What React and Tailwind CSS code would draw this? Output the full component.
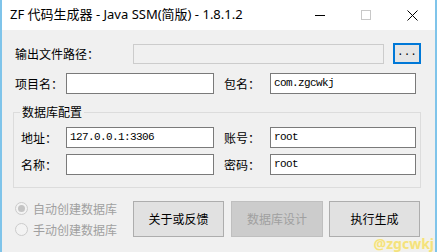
import React from 'react';

const cjk = { fontFamily: '"Microsoft YaHei", "Noto Sans CJK SC", "Noto Sans", sans-serif' };
const mono = { fontFamily: '"Liberation Mono", "DejaVu Sans Mono", monospace' };

const Field = ({ value, className = '' }) => (
    <div
        className={`h-[21px] bg-white border border-[#7a7a7a] flex items-center pl-[3px] text-[11px] tracking-[-0.6px] text-black ${className}`}
        style={mono}
    >
        {value}
    </div>
);

const Radio = ({ checked, label }) => (
    <div className="flex items-center h-[21px]">
        <div className="w-[13px] h-[13px] rounded-full border border-[#cccccc] bg-[#f3f3f3] flex items-center justify-center">
            {checked && <div className="w-[7px] h-[7px] rounded-full bg-[#c4c4c4]" />}
        </div>
        <span className="ml-[5px] text-[12px] text-[#a0a0a0]">{label}</span>
    </div>
);

const App = () => {
    return (
        <div
            className="w-[437px] h-[252px] bg-[#f0f0f0] border-l-2 border-r-2 border-[#7fc4ea] flex flex-col relative overflow-hidden select-none"
            style={cjk}
        >
            {/* title bar */}
            <div className="h-[30px] bg-white flex items-center shrink-0">
                <span className="pl-[8px] text-[13px] text-black flex-1" style={{ fontFamily: '"Noto Sans", "Noto Sans CJK SC", sans-serif' }}>
                    ZF 代码生成器 - Java SSM(简版) - 1.8.1.2
                </span>
                <div className="w-[46px] h-full flex items-center justify-center">
                    <div className="w-[10px] h-px bg-black" />
                </div>
                <div className="w-[46px] h-full flex items-center justify-center">
                    <div className="w-[10px] h-[10px] border border-[#c8c8c8]" />
                </div>
                <div className="w-[46px] h-full flex items-center justify-center">
                    <svg width="11" height="11" viewBox="0 0 11 11">
                        <path d="M0.5 0.5 L10.5 10.5 M10.5 0.5 L0.5 10.5" stroke="#000" strokeWidth="1" />
                    </svg>
                </div>
            </div>

            {/* content */}
            <div className="flex flex-col pt-[13px] text-[12px] text-black">
                <div className="flex items-center pl-[13px] h-[21px]">
                    <span className="w-[118px]">输出文件路径：</span>
                    <div className="w-[251px] h-[20px] border border-[#cccccc] bg-[#f0f0f0]" />
                    <button className="ml-[9px] w-[28px] h-[21px] border-2 border-[#0078d7] bg-[#e5e5e5] flex items-center justify-center text-[11px] leading-none pb-[3px]" style={mono}>
                        ...
                    </button>
                </div>

                <div className="flex items-center pl-[13px] h-[21px] mt-[9px]">
                    <span className="w-[51px]">项目名：</span>
                    <Field className="w-[148px]" value="" />
                    <span className="ml-[10px] w-[46px]">包名：</span>
                    <Field className="w-[146px]" value="com.zgcwkj" />
                </div>

                {/* group box */}
                <div className="relative ml-[11px] mt-[18px] w-[408px] h-[76px] border border-[#dcdcdc] pl-[7px] pt-[14px] flex flex-col gap-[6px]">
                    <span className="absolute -top-[9px] left-[6px] px-[2px] bg-[#f0f0f0] leading-[16px]">数据库配置</span>
                    <div className="flex items-center h-[21px]">
                        <span className="w-[45px]">地址：</span>
                        <Field className="w-[148px]" value="127.0.0.1:3306" />
                        <span className="ml-[10px] w-[46px]">账号：</span>
                        <Field className="w-[146px]" value="root" />
                    </div>
                    <div className="flex items-center h-[21px]">
                        <span className="w-[45px]">名称：</span>
                        <Field className="w-[148px]" value="" />
                        <span className="ml-[10px] w-[46px]">密码：</span>
                        <Field className="w-[146px]" value="root" />
                    </div>
                </div>

                {/* bottom */}
                <div className="flex items-start pl-[13px] mt-[13px]">
                    <div className="w-[118px] flex flex-col -mt-[3px]">
                        <Radio checked label="自动创建数据库" />
                        <Radio label="手动创建数据库" />
                    </div>
                    <button className="w-[91px] h-[36px] bg-[#e1e1e1] border border-[#adadad] text-[12px] text-black">
                        关于或反馈
                    </button>
                    <button className="ml-[7px] w-[92px] h-[36px] bg-[#cccccc] border border-[#bfbfbf] text-[12px] text-[#a0a0a0]">
                        数据库设计
                    </button>
                    <button className="ml-[6px] w-[91px] h-[36px] bg-[#e1e1e1] border border-[#adadad] text-[12px] text-black">
                        执行生成
                    </button>
                </div>
            </div>

            {/* watermark */}
            <span
                className="absolute right-[1px] bottom-[0px] text-[14px] font-bold leading-[16px] text-[#f4e27c]"
                style={{ fontFamily: '"Noto Sans", sans-serif', textShadow: '0 0 2px #fff8d0' }}
            >
                @zgcwkj
            </span>
        </div>
    );
};

export default App;
